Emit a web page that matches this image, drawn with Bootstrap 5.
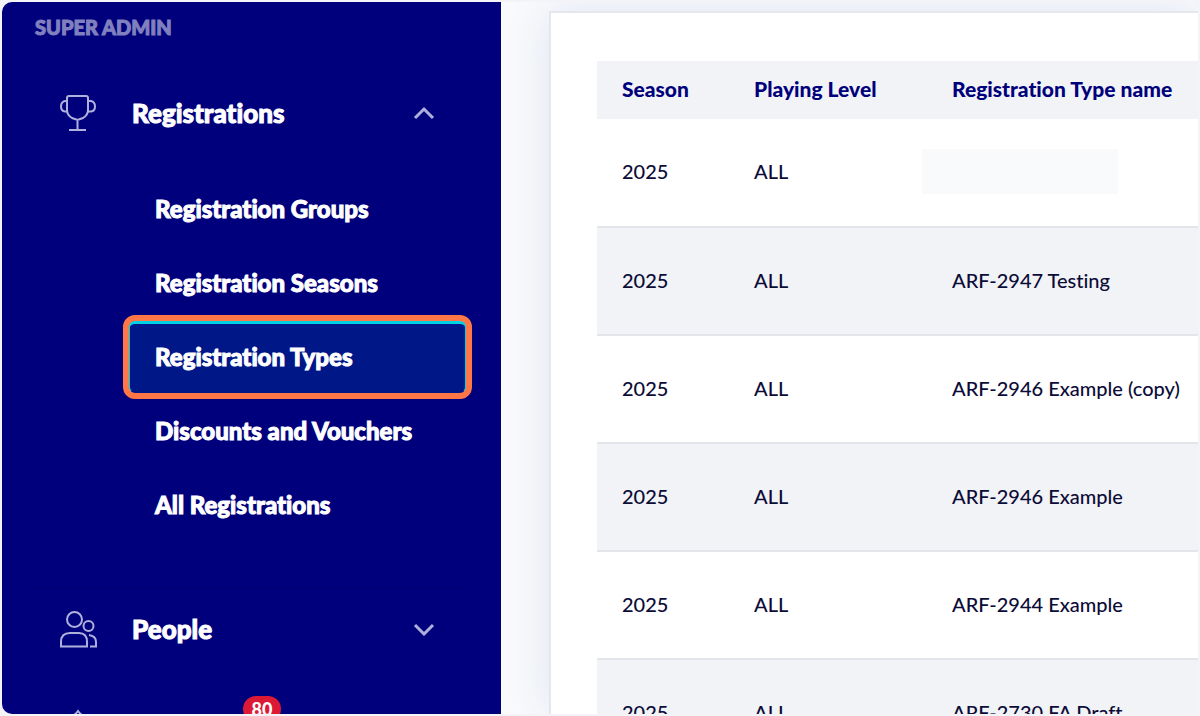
<!DOCTYPE html>
<html lang="en">
<head>
<meta charset="utf-8">
<meta name="viewport" content="width=device-width, initial-scale=1">
<title>Registration Types</title>
<link href="https://cdn.jsdelivr.net/npm/bootstrap@5.3.0/dist/css/bootstrap.min.css" rel="stylesheet">
<style>
body{background:#f4f3f8;font-family:Lato,"Open Sans",sans-serif;font-variant-ligatures:none}
.frame{height:100vh;padding:2px}
.shell{border-radius:10px;background:#f9fafc}
.side{flex:0 0 499px;background:#00007c;font-weight:900;color:#fff;-webkit-text-stroke:1px}
.side a{color:#fff;text-decoration:none}
.role{height:71px;padding:10px 0 0 33px;font-size:20px;line-height:30px;color:#8080be}
.group-row{height:80px;margin-bottom:19px;padding:0 66px 0 57px;font-size:26px}
.group-row .ico{width:38px;height:38px;margin-right:35px;flex:none}
.ico,.chev{fill:none;stroke:#b0b0dc;stroke-width:2}
.chev{width:22px;height:14px;stroke-width:3}
.sub{padding:0 34px 46px 126px}
.sub a{display:flex;align-items:center;height:74px;padding:0 0 3px 25px;border:2px solid transparent;border-top-width:4px;border-radius:7px;font-size:24px}
.sub a.active{background:#001788;border-color:#00d2e6;border-bottom-color:#001788;outline:6px solid #ff7747;outline-offset:-1px}
.divider{height:1px;margin:0 33px;background:#00006c}
.count{left:241px;top:8px;width:38px;height:26px;border-radius:13px;background:#dc1a35;font-size:18px;line-height:26px;-webkit-text-stroke:0}
.main-area{padding:9px 0 0 48px;background:#f9fafc}
.panel{border:2px solid #e6e7ed;border-width:2px 0 0 2px;background:#fff;padding:48px 0 0 46px;box-shadow:0 0 44px #dfe4f2;height:100%}
.grid{width:100%;table-layout:fixed;color:#0c0c38;font-size:20px;line-height:30px}
.grid th{height:58px;background:#f2f3f6;color:#00007c;font-size:21px;font-weight:900}
.grid th,.grid td{padding:0 0 3px 25px;white-space:nowrap}
.grid td{height:108px;border-bottom:2px solid #e5e6eb;font-weight:500}
.grid tbody tr:nth-child(even){background:#f2f3f6}
.c1{width:132px}.c2{width:198px}
.blank{width:196px;height:45px;margin-left:-30px;background:#f9fafc}
</style>
</head>
<body>
<div class="frame overflow-hidden">
<div class="shell d-flex h-100 overflow-hidden">
<nav class="side" aria-label="Super admin">
  <div class="role">SUPER ADMIN</div>
  <a href="#" class="group-row d-flex align-items-center">
    <svg class="ico" viewBox="0 0 38 38"><path d="M10 2h17q2 0 2 2v12q0 5-5 8l-5.500 2-5.500-2q-5-3-5-8V4q0-2 2-2M8 7H6Q2 8 2 12.500t4 5h3M29 7h3q4 1 4 5.500t-4 5h-3M18.500 26v10M10 36h17"/></svg>
    <span class="flex-grow-1">Registrations</span>
    <svg class="chev" viewBox="0 0 22 14"><path d="M2 12l9-9 9 9"/></svg>
  </a>
  <div class="sub">
    <a href="#">Registration Groups</a>
    <a href="#">Registration Seasons</a>
    <a href="#" class="active" aria-current="page">Registration Types</a>
    <a href="#">Discounts and Vouchers</a>
    <a href="#">All Registrations</a>
  </div>
  <div class="divider"></div>
  <a href="#" class="group-row d-flex align-items-center">
    <svg class="ico" viewBox="0 0 38 38"><circle cx="15.500" cy="9.500" r="7.500"/><circle cx="29.500" cy="16" r="5"/><path d="M2 36.500V32q0-9 9-9h9q8 0 8 9v4.500zM30 25q7 1 7 7v4.500h-6"/></svg>
    <span class="flex-grow-1">People</span>
    <svg class="chev" viewBox="0 0 22 14"><path d="M2 3l9 9 9-9"/></svg>
  </a>
  <a href="#" class="group-row d-flex align-items-center position-relative">
    <svg class="ico" viewBox="0 0 38 38"><path d="M3 10q10 0 16-8 6 8 16 8v24H3z"/></svg>
    <span class="count position-absolute text-center">80</span>
  </a>
</nav>
<main class="main-area flex-fill overflow-hidden">
  <div class="panel">
    <table class="grid">
      <colgroup><col class="c1"><col class="c2"><col></colgroup>
      <thead><tr><th>Season</th><th>Playing Level</th><th>Registration Type name</th></tr></thead>
      <tbody>
        <tr><td>2025</td><td>ALL</td><td><div class="blank"></div></td></tr>
        <tr><td>2025</td><td>ALL</td><td>ARF-2947 Testing</td></tr>
        <tr><td>2025</td><td>ALL</td><td>ARF-2946 Example (copy)</td></tr>
        <tr><td>2025</td><td>ALL</td><td>ARF-2946 Example</td></tr>
        <tr><td>2025</td><td>ALL</td><td>ARF-2944 Example</td></tr>
        <tr><td>2025</td><td>ALL</td><td>ARF-2730 FA Draft</td></tr>
      </tbody>
    </table>
  </div>
</main>
</div>
</div>
<script src="https://cdn.jsdelivr.net/npm/bootstrap@5.3.0/dist/js/bootstrap.bundle.min.js"></script>
</body>
</html>
